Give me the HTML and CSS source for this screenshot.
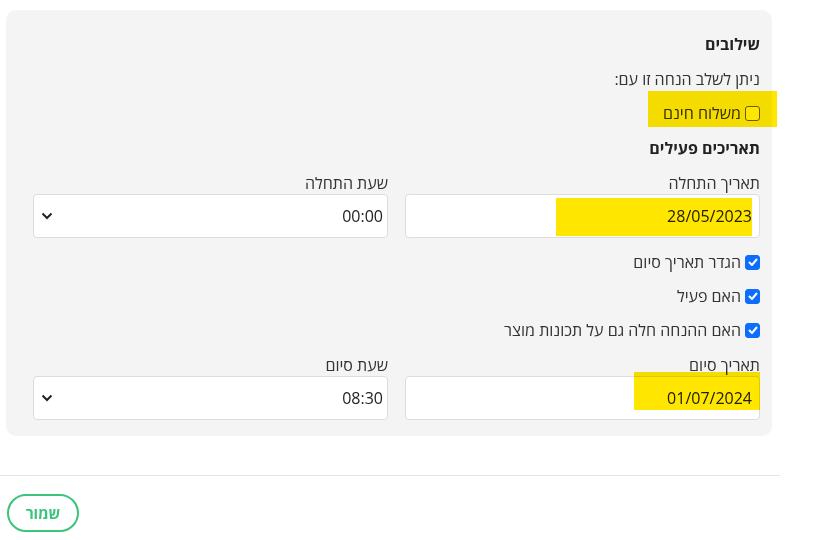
FILE: index.html
```html
<!DOCTYPE html>
<html lang="he" dir="rtl">
<head>
  <meta charset="UTF-8" />
  <meta name="viewport" content="width=device-width, initial-scale=1.0" />
  <title>הנחה</title>
  <link rel="stylesheet" href="styles.css">
</head>
<body>

  <div class="panel">
    <div class="title">שילובים</div>
    <div class="line">ניתן לשלב הנחה זו עם:</div>
    <div class="check-row first">
      <span class="box"></span>
      <span>משלוח חינם</span>
    </div>

    <div class="title gap">תאריכים פעילים</div>
    <div class="fields">
      <div class="field">
        <div class="label">תאריך התחלה</div>
        <div class="input">28/05/2023</div>
      </div>
      <div class="field">
        <div class="label">שעת התחלה</div>
        <div class="input select">
          <span>00:00</span>
          <svg width="12" height="8" viewBox="0 0 12 8"><path d="M1.5 1.5 L6 6 L10.5 1.5" fill="none" stroke="#222" stroke-width="2"/></svg>
        </div>
      </div>
    </div>

    <div class="checks">
      <div class="check-row">
        <span class="box on"><svg width="10" height="8" viewBox="0 0 10 8"><path d="M1 4 L4 7 L9 1" fill="none" stroke="#fff" stroke-width="2"/></svg></span>
        <span>הגדר תאריך סיום</span>
      </div>
      <div class="check-row">
        <span class="box on"><svg width="10" height="8" viewBox="0 0 10 8"><path d="M1 4 L4 7 L9 1" fill="none" stroke="#fff" stroke-width="2"/></svg></span>
        <span>האם פעיל</span>
      </div>
      <div class="check-row">
        <span class="box on"><svg width="10" height="8" viewBox="0 0 10 8"><path d="M1 4 L4 7 L9 1" fill="none" stroke="#fff" stroke-width="2"/></svg></span>
        <span>האם ההנחה חלה גם על תכונות מוצר</span>
      </div>
    </div>

    <div class="fields">
      <div class="field">
        <div class="label">תאריך סיום</div>
        <div class="input">01/07/2024</div>
      </div>
      <div class="field">
        <div class="label">שעת סיום</div>
        <div class="input select">
          <span>08:30</span>
          <svg width="12" height="8" viewBox="0 0 12 8"><path d="M1.5 1.5 L6 6 L10.5 1.5" fill="none" stroke="#222" stroke-width="2"/></svg>
        </div>
      </div>
    </div>

    <div class="mark mark-combo"></div>
    <div class="mark mark-start"></div>
    <div class="mark mark-end"></div>
  </div>

  <hr class="divider">

  <button class="save">שמור</button>

</body>
</html>
```

FILE: styles.css
```css
body {
  margin: 0;
  font-family: "Open Sans", "Noto Sans", "DejaVu Sans", sans-serif;
  font-size: 16px;
  color: #333;
  background: #fff;
}
.panel {
  position: relative;
  float: left;
  width: 727px;
  margin: 10px 0 0 6px;
  padding: 23px 12px 16px 27px;
  background: #f4f4f4;
  border-radius: 10px;
}
.title {
  font-weight: bold;
  font-size: 16px;
  line-height: 22px;
  color: #222;
}
.title.gap {
  margin-top: 13px;
}
.line {
  line-height: 22px;
  margin-top: 13px;
}
.check-row {
  display: flex;
  align-items: center;
  gap: 4px;
  line-height: 22px;
}
.check-row.first {
  margin-top: 12px;
}
.box {
  width: 13px;
  height: 13px;
  border: 1px solid #666;
  border-radius: 3px;
  background: #fff;
  display: flex;
  align-items: center;
  justify-content: center;
}
.box.on {
  background: #0d6efd;
  border-color: #0d6efd;
}
.fields {
  display: grid;
  grid-template-columns: 1fr 1fr;
  gap: 17px;
  margin-top: 13px;
}
.label {
  line-height: 22px;
}
.input {
  height: 42px;
  border: 1px solid #ddd;
  border-radius: 4px;
  background: #fff;
  display: flex;
  align-items: center;
  padding: 0 7px 0 7px;
  color: #222;
}
.select {
  justify-content: space-between;
  padding-right: 4px;
}
.checks {
  margin-top: 13px;
  display: flex;
  flex-direction: column;
  gap: 12px;
}
.mark {
  position: absolute;
  background: #ffe600;
  mix-blend-mode: multiply;
}
.mark-combo {
  left: 642px;
  top: 81px;
  width: 129px;
  height: 36px;
}
.mark-start {
  left: 550px;
  top: 188px;
  width: 196px;
  height: 38px;
}
.mark-end {
  left: 628px;
  top: 362px;
  width: 126px;
  height: 38px;
}
.divider {
  clear: both;
  float: left;
  position: relative;
  top: 39px;
  width: 780px;
  margin: 0;
  border: 0;
  border-top: 1px solid #e5e5e5;
}
.save {
  clear: both;
  float: left;
  margin: 57px 0 0 7px;
  width: 72px;
  height: 38px;
  border: 2px solid #3cc47c;
  border-radius: 19px;
  background: #fff;
  color: #3cc47c;
  font-family: "Open Sans", "Noto Sans", sans-serif;
  font-weight: bold;
  font-size: 15px;
}
```
